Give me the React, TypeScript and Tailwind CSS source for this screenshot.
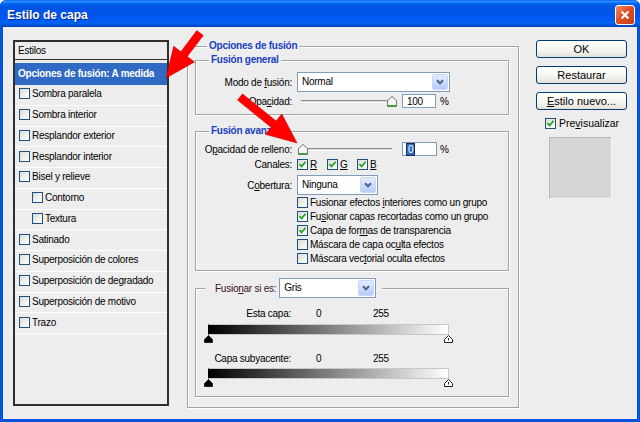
import React from "react";

const styles: [string, boolean][] = [
  ["Sombra paralela", false],
  ["Sombra interior", false],
  ["Resplandor exterior", false],
  ["Resplandor interior", false],
  ["Bisel y relieve", false],
  ["Contorno", true],
  ["Textura", true],
  ["Satinado", false],
  ["Superposición de colores", false],
  ["Superposición de degradado", false],
  ["Superposición de motivo", false],
  ["Trazo", false],
];

const Box = ({ on = false }: { on?: boolean }) => (
  <span className="flex h-[11px] w-[11px] shrink-0 items-center justify-center border border-[#1c5180] bg-[linear-gradient(135deg,#dcdcd6,#f5f5f3_70%,#ffffff)]">
    {on && (
      <svg width="9" height="9" viewBox="0 0 9 9">
        <path d="M1.4 4 L3.6 6.4 L7.6 1.8" fill="none" stroke="#21a121" strokeWidth="1.7" />
      </svg>
    )}
  </span>
);

const Chevron = () => (
  <span className="m-[1px] flex w-[16px] items-center justify-center rounded-[2px] border border-[#c6d6fb] bg-[linear-gradient(to_bottom,#e3ebfe,#b7cbf7)]">
    <svg width="8" height="6" viewBox="0 0 8 6">
      <path d="M1 1.2 L4 4.4 L7 1.2" fill="none" stroke="#4d6185" strokeWidth="2" />
    </svg>
  </span>
);

const Thumb = () => (
  <svg width="10" height="11" viewBox="0 0 10 11">
    <path d="M0.5 10.5 V4.5 L5 0.5 L9.5 4.5 V10.5 Z" fill="#f6f6f6" stroke="#6b776b" />
    <path d="M1 9.8 H9" stroke="#21a121" strokeWidth="1.4" />
  </svg>
);

const Slider = ({ end = false }: { end?: boolean }) => (
  <div className="relative ml-[6px] h-[14px] w-[100px]">
    <div className="absolute left-[3px] right-[6px] top-[6px] h-[3px] border-t border-b border-t-[#8e8e8e] border-b-white bg-[#d9d9d9]" />
    <div className={end ? "absolute left-[89px] top-[2px]" : "absolute left-0 top-[2px]"}>
      <Thumb />
    </div>
  </div>
);

const Tri = ({ dark = false }: { dark?: boolean }) => (
  <svg width="9" height="8" viewBox="0 0 9 8">
    <path
      d="M4.5 0.5 L8.5 4.5 V7.5 H0.5 V4.5 Z"
      fill={dark ? "#000" : "#fff"}
      stroke="#222"
    />
    {!dark && <path d="M4.5 3 V5.5" stroke="#222" />}
  </svg>
);

const Group = ({ children, cls }: { children: React.ReactNode; cls: string }) => (
  <div
    className={`border border-[#a3a3a3] shadow-[inset_1px_1px_0_#ffffff,1px_1px_0_#ffffff] ${cls}`}
  >
    {children}
  </div>
);

const Btn = ({ children }: { children: React.ReactNode }) => (
  <div className="flex h-[18px] items-center justify-center rounded-[3px] border border-[#003c74] bg-[linear-gradient(to_bottom,#ffffff,#f5f4ef_60%,#e2e0d7)] text-[11px] tracking-normal text-black">
    {children}
  </div>
);

const Ch = ({ on, children }: { on?: boolean; children: React.ReactNode }) => (
  <div className="flex h-[14px] items-center gap-[2px] pl-[101px]">
    <Box on={on} />
    <span>{children}</span>
  </div>
);

export default function App() {
  return (
    <div className="relative h-[422px] w-[640px] overflow-hidden rounded-t-[6px] bg-[#0752dc] font-['Liberation_Sans',Arial,sans-serif] text-[10px] tracking-[-0.25px] text-black">
      {/* title bar */}
      <div className="flex h-[27px] items-center justify-between bg-[linear-gradient(to_bottom,#0058ee_0%,#3593ff_5%,#127dff_9%,#0262ee_14%,#0057e5_22%,#0054e3_30%,#0055eb_60%,#005bf5_70%,#0262ee_86%,#0050d6_94%,#0040b8_100%)] pl-[7px] pr-[5px] pt-[2px]">
        <span className="text-[12px] font-bold tracking-normal text-white [text-shadow:1px_1px_0_#0a2a8a]">
          Estilo de capa
        </span>
        <div className="flex h-[20px] w-[20px] items-center justify-center rounded-[3px] border border-white bg-[linear-gradient(135deg,#f08a66,#e0512b_45%,#c43a14)]">
          <svg width="10" height="10" viewBox="0 0 10 10">
            <path d="M1.5 1.5 L8.5 8.5 M8.5 1.5 L1.5 8.5" stroke="#fff" strokeWidth="2" />
          </svg>
        </div>
      </div>

      {/* client */}
      <div className="mx-[3px] flex h-[392px] items-start bg-[#ededed] pl-[10px] pt-[13px]">
        {/* styles list */}
        <div className="h-[366px] w-[156px] shrink-0 border-2 border-[#2f2f2f] bg-[#ededed]">
          <div className="h-[18px] border-b border-[#2f2f2f] pl-[3px] leading-[17px]">Estilos</div>
          <div className="mt-[3px] h-[22px] bg-[#316ac5] pl-[3px] font-bold leading-[22px] text-white">
            Opciones de fusión: A medida
          </div>
          {styles.map(([name, sub]) => (
            <div
              key={name}
              className={`flex h-[20.75px] items-center gap-[2px] border-b border-white pb-[2px] ${sub ? "pl-[17px]" : "pl-[4px]"}`}
            >
              <Box />
              <span>{name}</span>
            </div>
          ))}
        </div>

        {/* blending options */}
        <Group cls="ml-[18px] mt-[6px] h-[362px] w-[332px] shrink-0 pl-[7px]">
          <div className="-mt-[7px] ml-[12px] w-fit bg-[#ededed] px-[2px] font-bold leading-[12px] text-[#1940c0]">
            Opciones de fusión
          </div>

          <Group cls="mt-[8px] h-[55px] w-[314px]">
            <div className="-mt-[7px] ml-[13px] w-fit bg-[#ededed] px-[2px] font-bold leading-[12px] text-[#1940c0]">
              Fusión general
            </div>
            <div className="mt-[6px] flex h-[20px] items-center">
              <span className="w-[96px] text-right">
                Modo de <span className="underline">f</span>usión:
              </span>
              <div className="ml-[5px] flex h-[20px] w-[153px] border border-[#7f9db9] bg-white">
                <span className="flex-1 pl-[4px] leading-[18px]">Normal</span>
                <Chevron />
              </div>
            </div>
            <div className="mt-[2px] flex h-[14px] items-center">
              <span className="w-[96px] text-right">
                Opa<span className="underline">c</span>idad:
              </span>
              <Slider end />
              <div className="ml-[4px] flex h-[14px] w-[34px] items-center border border-[#7f9db9] bg-white pl-[4px]">
                100
              </div>
              <span className="ml-[4px]">%</span>
            </div>
          </Group>

          <Group cls="mt-[16px] h-[140px] w-[314px]">
            <div className="-mt-[7px] ml-[13px] w-fit bg-[#ededed] px-[2px] font-bold leading-[12px] text-[#1940c0]">
              Fusión avanzada
            </div>
            <div className="mt-[5px] flex h-[14px] items-center">
              <span className="w-[96px] text-right">
                O<span className="underline">p</span>acidad de relleno:
              </span>
              <Slider />
              <div className="ml-[4px] flex h-[14px] w-[35px] items-center border border-[#7f9db9] bg-white pl-[4px]">
                <span className="bg-[#316ac5] px-[1px] leading-[11px] text-white outline outline-1 outline-[#1a2a50]">0</span>
              </div>
              <span className="ml-[3px]">%</span>
            </div>
            <div className="mt-[1px] flex h-[14px] items-center">
              <span className="w-[96px] text-right">Canales:</span>
              <div className="ml-[5px] flex">
                {["R", "G", "B"].map((c) => (
                  <div key={c} className="flex w-[30px] items-center gap-[2px]">
                    <Box on />
                    <span className="underline">{c}</span>
                  </div>
                ))}
              </div>
            </div>
            <div className="mt-[4px] flex h-[20px] items-center">
              <span className="w-[96px] text-right">
                C<span className="underline">o</span>bertura:
              </span>
              <div className="ml-[5px] flex h-[20px] w-[81px] border border-[#7f9db9] bg-white">
                <span className="flex-1 pl-[4px] leading-[18px]">Ninguna</span>
                <Chevron />
              </div>
            </div>
            <Ch>
              Fusionar efectos <span className="underline">i</span>nteriores como un grupo
            </Ch>
            <Ch on>
              Fu<span className="underline">s</span>ionar capas recortadas como un grupo
            </Ch>
            <Ch on>
              Capa de for<span className="underline">m</span>as de transparencia
            </Ch>
            <Ch>
              Máscara de capa oc<span className="underline">u</span>lta efectos
            </Ch>
            <Ch>
              Máscara vec<span className="underline">t</span>orial oculta efectos
            </Ch>
          </Group>

          <Group cls="mt-[17px] h-[109px] w-[314px]">
            <div className="-mt-[11px] ml-[9px] flex h-[20px] w-fit items-center bg-[#ededed] pl-[10px] pr-[6px]">
              <span className="text-[#3a1420]">
                Fusio<span className="underline">n</span>ar si es:
              </span>
              <div className="ml-[3px] flex h-[20px] w-[97px] border border-[#7f9db9] bg-white">
                <span className="flex-1 pl-[4px] leading-[18px]">Gris</span>
                <Chevron />
              </div>
            </div>
            <div className="mt-[9px] flex h-[12px] items-center">
              <span className="w-[95px] text-right">Esta capa:</span>
              <span className="ml-[25px] w-[57px]">0</span>
              <span>255</span>
            </div>
            <div className="ml-[12px] mt-[5px] h-[11px] w-[241px] border border-[#c8c8c8] border-l-black bg-[linear-gradient(to_right,#000,#fff)]" />
            <div className="ml-[8px] flex h-[8px] w-[249px] justify-between">
              <Tri dark />
              <Tri />
            </div>
            <div className="mt-[9px] flex h-[12px] items-center">
              <span className="w-[95px] text-right">Capa subyacente:</span>
              <span className="ml-[25px] w-[57px]">0</span>
              <span>255</span>
            </div>
            <div className="ml-[12px] mt-[4px] h-[11px] w-[241px] border border-[#c8c8c8] border-l-black bg-[linear-gradient(to_right,#000,#fff)]" />
            <div className="ml-[8px] flex h-[8px] w-[249px] justify-between">
              <Tri dark />
              <Tri />
            </div>
          </Group>
        </Group>

        {/* buttons */}
        <div className="ml-[17px] flex w-[91px] shrink-0 flex-col">
          <Btn>OK</Btn>
          <div className="mt-[8px]">
            <Btn>Restaurar</Btn>
          </div>
          <div className="mt-[8px]">
            <Btn>
              <span className="underline">E</span>stilo nuevo...
            </Btn>
          </div>
          <div className="mt-[8px] flex h-[11px] items-center gap-[3px] pl-[9px] text-[10.5px] tracking-normal">
            <Box on />
            <span>
              Pre<span className="underline">v</span>isualizar
            </span>
          </div>
          <div className="ml-[13px] mt-[8px] h-[62px] w-[63px] border border-b-[#f7f7f7] border-l-[#b8b8b8] border-r-[#f7f7f7] border-t-[#b8b8b8] bg-[#d6d6d6]" />
        </div>
      </div>

      {/* annotation arrows */}
      <svg className="pointer-events-none absolute left-0 top-0" width="640" height="422">
        <polygon
          points="203.2,35.4 187.3,56.5 194.5,61.9 166,78 173.7,46.3 180.9,51.7 196.8,30.6"
          fill="#ff0000"
          stroke="#d00000"
          strokeWidth="0.6"
        />
        <polygon
          points="237.5,100.1 271.1,127.3 265.4,134.3 297,143 281.8,114.1 276.1,121.1 242.5,93.9"
          fill="#ff0000"
          stroke="#d00000"
          strokeWidth="0.6"
        />
      </svg>
    </div>
  );
}
